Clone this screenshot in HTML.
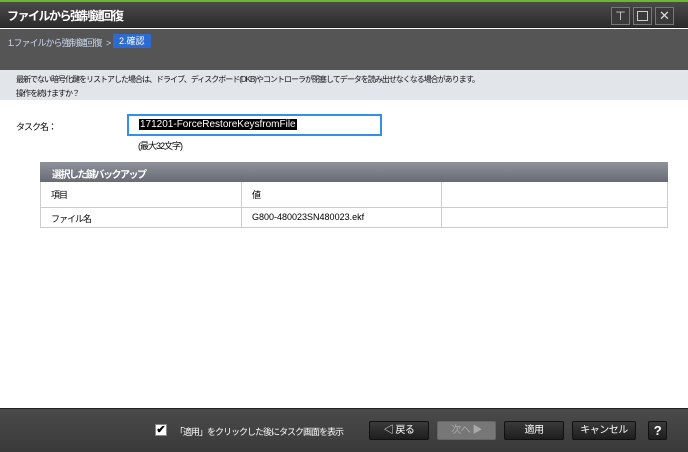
<!DOCTYPE html><html><head><style>
*{margin:0;padding:0;box-sizing:border-box}
body{width:688px;height:452px;overflow:hidden;font-family:"Liberation Sans","Noto Sans CJK JP",sans-serif;font-size:10px;background:#fff;position:relative}
.a{position:absolute;white-space:nowrap}
.j{font-size:9px;letter-spacing:-1px}
.btn{position:absolute;top:421px;height:19px;border:1px solid #111;border-radius:2px;background:linear-gradient(#3a3a3a,#1e1e1e);color:#fff;text-align:center;line-height:17px;font-size:10px;letter-spacing:-0.5px}
</style></head><body>
<div class="a" style="left:0;top:0;width:688px;height:2px;background:#6ab82e"></div>
<div class="a" style="left:0;top:2px;width:688px;height:26px;background:linear-gradient(#4a4a4a,#2c2c2c);border-bottom:1px solid #222"></div>
<div class="a" style="left:7px;top:7px;color:#fff;font-size:12px;letter-spacing:-1.5px;font-weight:bold">ファイルから強制鍵回復</div>
<div class="a" style="left:611px;top:7px;width:19px;height:18px;border:1px solid #777;background:#3a3a3a;color:#ddd;text-align:center;font-size:12px;line-height:16px">⊤</div>
<div class="a" style="left:633px;top:7px;width:19px;height:18px;border:1px solid #777;background:#3a3a3a"><div style="margin:3px;width:11px;height:10px;border:1px solid #ccc"></div></div>
<div class="a" style="left:655px;top:7px;width:19px;height:18px;border:1px solid #777;background:#3a3a3a;color:#ddd;text-align:center;font-size:13px;line-height:16px">✕</div>
<div class="a" style="left:0;top:29px;width:688px;height:41px;background:#555"></div>
<div class="a j" style="left:8px;top:36px;color:#c9d6ea">1.ファイルから強制鍵回復 &nbsp;&nbsp;&gt;</div>
<div class="a j" style="left:113px;top:34px;width:38px;height:14px;background:#2d6bd1;color:#fff;padding-left:6px;line-height:14px;letter-spacing:0">2.確認</div>
<div class="a" style="left:0;top:70px;width:688px;height:30px;background:#e2e5ea"></div>
<div class="a" style="left:16px;top:73px;font-size:8px;letter-spacing:-1px;line-height:14px;color:#111">最新でない暗号化鍵をリストアした場合は、ドライブ、ディスクボード(DKB)やコントローラが閉塞してデータを読み出せなくなる場合があります。<br>操作を続けますか？</div>
<div class="a j" style="left:16px;top:120px">タスク名：</div>
<div class="a" style="left:127px;top:114px;width:255px;height:22px;border:2px solid #3290e8;background:#fff"><span style="position:absolute;left:10px;top:3px;background:#000;color:#fff;font-size:10px;padding:0 1px">171201-ForceRestoreKeysfromFile</span></div>
<div class="a j" style="left:138px;top:139px">(最大32文字)</div>
<div class="a" style="left:40px;top:162px;width:628px;height:20px;background:linear-gradient(#8f929a,#686b73);color:#fff;font-size:10px;letter-spacing:-1.5px;font-weight:bold;padding:4px 0 0 12px">選択した鍵バックアップ</div>
<div class="a" style="left:40px;top:182px;width:628px;height:46px;border:1px solid #ccc;border-top:none">
<div class="a" style="left:0;top:25px;width:626px;height:1px;background:#ccc"></div>
<div class="a" style="left:200px;top:0;width:1px;height:45px;background:#ccc"></div>
<div class="a" style="left:400px;top:0;width:1px;height:45px;background:#ccc"></div>
<div class="a j" style="left:10px;top:6px">項目</div>
<div class="a j" style="left:211px;top:6px">値</div>
<div class="a j" style="left:10px;top:30px">ファイル名</div>
<div class="a" style="left:211px;top:30px;font-size:9px">G800-480023SN480023.ekf</div>
</div>
<div class="a" style="left:0;top:408px;width:688px;height:44px;background:linear-gradient(#4a4a4a,#3a3a3a);border-top:1px solid #222"></div>
<div class="a" style="left:155px;top:424px;width:12px;height:12px;background:#fff;border:1px solid #888;color:#000;font-size:11px;line-height:10px;text-align:center;font-weight:bold">✔</div>
<div class="a j" style="left:175px;top:425px;color:#fff">「適用」をクリックした後にタスク画面を表示</div>
<div class="btn" style="left:369px;width:60px">◁ 戻る</div>
<div class="btn" style="left:437px;width:59px;background:#777;border-color:#666;color:#aaa">次へ ▶</div>
<div class="btn" style="left:504px;width:60px">適用</div>
<div class="btn" style="left:572px;width:64px">キャンセル</div>
<div class="btn" style="left:648px;width:19px;font-weight:bold;font-size:13px">?</div>
</body></html>
